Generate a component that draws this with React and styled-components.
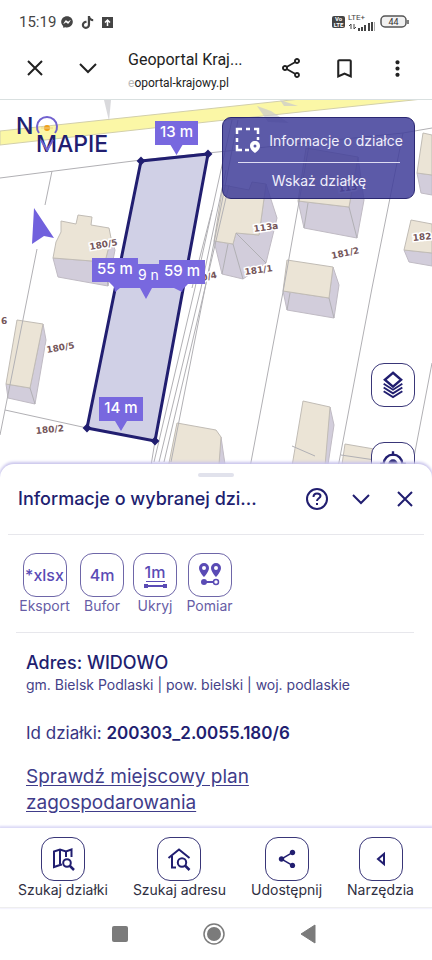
import React from "react";
import styled, { createGlobalStyle } from "styled-components";
import { FaFacebookMessenger, FaTiktok } from "react-icons/fa6";
import { MdBookmarkBorder, MdMoreVert, MdOutlineShare, MdShare } from "react-icons/md";

const ink = "#211e70";
const violet = "#5a4bb5";

const GlobalStyle = createGlobalStyle`
  * { box-sizing: border-box; }
  body { margin: 0; background: #fff; font-family: Inter, "Noto Sans", sans-serif; color: ${ink}; }
  button { margin: 0; padding: 0; border: 0; background: none; color: inherit; font: inherit; cursor: pointer; }
  svg { display: block; }
  h1, h2, p { margin: 0; }
`;

const Screen = styled.div`
  display: flex;
  flex-direction: column;
  min-height: 100vh;
`;

const StatusBar = styled.div`
  display: flex;
  align-items: center;
  justify-content: space-between;
  height: 44px;
  padding: 0 23px 0 19px;
  color: #454545;
  font: 15px Roboto, sans-serif;
`;

const StatusGroup = styled.div`
  display: flex;
  align-items: center;
  gap: ${(p) => p.$gap}px;
`;

const VolteBadge = styled.span`
  width: 13px;
  height: 12px;
  border-radius: 2px;
  background: #444;
  color: #fff;
  font: bold 6px/6px Roboto, sans-serif;
  text-align: center;
`;

const Signal = styled.div`
  display: flex;
  flex-direction: column;
  width: 29px;
  font: 8px/8px Roboto, sans-serif;
`;

const BrowserBar = styled.header`
  display: flex;
  align-items: flex-start;
  height: 56px;
  padding: 4px 22px 0;
  color: #222;
  border-bottom: 1px solid #d9e0e0;
  font-family: Roboto, sans-serif;
`;

const BarButton = styled.button`
  display: grid;
  place-items: center;
  width: 26px;
  height: 40px;
  margin-right: ${(p) => p.$after || 0}px;
`;

const PageName = styled.div`
  flex: 1;
  min-width: 0;
  white-space: nowrap;
`;

const PageTitle = styled.div`
  font-size: 16px;
  line-height: 23px;
`;

const PageUrl = styled.div`
  font-size: 12px;
  line-height: 24px;
  span { color: #bbb; }
`;

const MapArea = styled.section`
  position: relative;
  height: 378px;
  margin-bottom: -14px;
  overflow: hidden;
`;

const MapDrawing = styled.svg`
  width: 100%;
  height: 100%;
`;

const Logo = styled.svg`
  position: absolute;
  left: 14px;
  top: 10px;
`;

const InfoPanel = styled.div`
  position: absolute;
  top: 17px;
  right: 17px;
  width: 193px;
  height: 82px;
  padding: 0 8px 0 9px;
  border: 1px solid #2b2872;
  border-radius: 9px;
  background: rgba(65, 63, 154, 0.86);
  color: #f0effb;
`;

const InfoRow = styled.button`
  display: flex;
  align-items: center;
  justify-content: center;
  gap: 8px;
  width: 100%;
  height: ${(p) => p.$height}px;
  font-size: 14px;
  white-space: nowrap;
`;

const InfoRule = styled.div`
  height: 1px;
  margin: 0 6px;
  background: #dedcf2;
`;

const MapControls = styled.div`
  position: absolute;
  top: 263px;
  right: 17px;
  display: grid;
  gap: 35px;
`;

const Tile = styled.span`
  display: grid;
  place-items: center;
  width: 44px;
  height: 44px;
  border: 1px solid ${(p) => (p.$soft ? "#6e66a8" : "#393678")};
  border-radius: 13px;
  background: #fff;
  color: ${(p) => (p.$soft ? violet : ink)};
  font-size: 16px;
  font-weight: 500;
`;

const Sheet = styled.main`
  position: relative;
  flex: 1;
  border-radius: 14px 14px 0 0;
  background: #fff;
  box-shadow: 0 -1px 3px 1px #c9c4ec;
`;

const Handle = styled.div`
  width: 36px;
  height: 4px;
  margin: 0 auto;
  border-radius: 2px;
  background: #e1e2ec;
`;

const SheetTop = styled.div`
  padding-top: 9px;
`;

const SheetHeader = styled.div`
  display: flex;
  align-items: center;
  height: 58px;
  margin: 0 8px;
  padding: 0 7px 14px 10px;
  border-bottom: 1px solid #e7e7ec;
`;

const SheetTitle = styled.h1`
  flex: 1;
  font-size: 18px;
  line-height: 24px;
  font-weight: 500;
  white-space: nowrap;
`;

const HeaderActions = styled.div`
  display: flex;
  align-items: center;
  gap: 20px;
`;

const Tools = styled.div`
  display: grid;
  grid-template-columns: 53px 44px 44px 47px;
  gap: 9px;
  height: 98px;
  margin: 0 18px 0 16px;
  padding: 18px 2px;
  border-bottom: 1px solid #e7e7ec;
`;

const Action = styled.button`
  display: flex;
  flex-direction: column;
  align-items: center;
  color: ${(p) => (p.$soft ? "#675da6" : "#302f42")};
  font-size: 14px;
  line-height: 17px;
  white-space: nowrap;
`;

const Details = styled.div`
  padding: 18px 26px 10px;
`;

const Address = styled.h2`
  font-size: 18px;
  line-height: 24px;
  font-weight: 500;
`;

const Region = styled.p`
  margin-bottom: 25px;
  color: #454288;
  font-size: 14px;
  line-height: 20px;
`;

const PlotId = styled.p`
  margin-bottom: 18px;
  color: #383583;
  font-size: 17px;
  line-height: 26px;
  strong { color: ${ink}; font-weight: 600; }
`;

const PlanLink = styled.a`
  display: block;
  max-width: 260px;
  color: #403c8a;
  font-size: 19px;
  line-height: 26px;
  text-underline-offset: 2px;
`;

const Toolbar = styled.nav`
  position: relative;
  display: flex;
  justify-content: space-between;
  height: 80px;
  padding: 9px 18px 0;
  background: #fff;
  border-bottom: 1px solid #eee;
  box-shadow: 0 -1px 2px 1px #dcdaf7;
`;

const SystemNav = styled.div`
  display: flex;
  justify-content: center;
  align-items: center;
  gap: 70px;
  height: 52px;
  padding-right: 4px;
  color: #7b7b7b;
`;

const roofs = [
  "61,221 76,224 78,215 92,217 91,225 109,228 111,238 105,262 53,258 56,242 61,232",
  "17,320 43,324 30,388 6,384",
  "223,185 249,190 252,182 266,184 259,235 236,233 233,244 214,241",
  "306,148 358,157 349,207 298,201",
  "287,260 333,267 329,298 283,291",
  "423,133 432,135 432,175 417,173",
  "411,220 432,224 432,253 404,250",
  "303,401 330,407 324,478 290,478",
  "345,444 380,450 380,478 340,478",
  "177,423 216,430 221,437 218,478 166,478",
];
const walls = [
  "53,258 105,262 111,238 115,250 108,286 58,277",
  "43,324 46,340 35,404 8,398 6,384 30,388",
  "266,184 277,218 266,263 243,279 222,274 214,241 233,244 236,233 259,235",
  "298,201 349,207 358,157 364,200 357,238 304,228",
  "333,267 339,285 334,318 287,310 283,291 329,298",
  "417,173 432,175 432,195 421,193",
  "404,250 432,253 432,266 409,262",
  "330,407 334,425 326,478 323,478",
  "221,437 227,478 218,478",
];
const boundaries = [
  "0,178 70,169 141,160 208,153 403,133 432,128",
  "52,171 45,205",
  "37,249 0,435",
  "5,410 87,428 155,441 149,478",
  "232,120 195,288 154,462",
  "226,170 201,288 159,462",
  "229,185 205,288 164,462",
  "238,120 171,462",
  "212,210 192,288",
  "310,140 283,292 248,478",
  "403,133 372,288 336,478",
  "432,363 410,478",
  "105,262 108,286",
  "30,388 35,404",
  "233,244 243,279",
  "236,233 266,263",
  "222,274 228,244",
  "349,207 357,238",
  "304,228 308,203",
  "329,298 334,318",
  "287,310 290,293",
  "292,446 315,456",
  "341,455 375,460",
];
const plotNumbers = [
  ["180/5", 90, 250, -10],
  ["180/5", 47, 353, -10],
  ["180/2", 36, 434, -6],
  ["181/1", 245, 275, -8],
  ["181/2", 332, 259, -12],
  ["182", 413, 241, -6],
  ["6", 1, 324, 0],
  ["0/4", 202, 281, -12],
  ["113a", 254, 232, -8],
  ["113", 339, 192, -8],
];

function Tag({ x, y, w, label, tip = 10 }) {
  const mid = x + w / 2;
  return (
    <g>
      <path d={`M${x} ${y}h${w}v24H${mid + 6}L${mid} ${y + 24 + tip}L${mid - 6} ${y + 24}H${x}z`} fill="#7868df" />
      <text x={mid} y={y + 16} textAnchor="middle" fill="#fff" fontSize="15" fontWeight="500">{label}</text>
    </g>
  );
}

function PlotMap() {
  return (
    <MapDrawing viewBox="0 100 432 378" preserveAspectRatio="xMidYMin slice" role="img" aria-label="Mapa działek">
      <rect y="100" width="432" height="378" fill="#fff" />
      <path d="M0 131L216 108L432 85V98L216 121L0 145z" fill="#fbf7a6" stroke="#d2cfab" strokeWidth="1" />
      <path d="M104 100h7l-2 21zM257 106l11 16 21 1-18-12zM280 100l18 6-14 0z" fill="#c9c9cd" opacity=".7" />
      <g fill="#d2cddb" stroke="#c0bbc4">{walls.map((p) => <polygon key={p} points={p} />)}</g>
      <g fill="#ebe4d6" stroke="#c1bcb5">{roofs.map((p) => <polygon key={p} points={p} />)}</g>
      <g fill="none" stroke="#b1b0b4" strokeWidth="1">{boundaries.map((p) => <polyline key={p} points={p} />)}</g>
      <g fill="#75565a" stroke="#fff" strokeWidth="3" paintOrder="stroke" fontFamily="DejaVu Sans" fontSize="9" fontWeight="bold">
        {plotNumbers.map(([label, x, y, turn]) => (
          <text key={`${label}${x}`} x={x} y={y} transform={`rotate(${turn} ${x} ${y})`}>{label}</text>
        ))}
      </g>
      <polygon points="141,161 208,154 155,441 87,428" fill="#d0d0e6" stroke={ink} strokeWidth="3" />
      <path d="M141 158l3 3-3 3-3-3zM208 151l3 3-3 3-3-3zM155 438l3 3-3 3-3-3zM87 425l3 3-3 3-3-3z" fill={ink} stroke={ink} strokeWidth="2" />
      <path d="M34 208L54 238L44 236L32 244z" fill="#7161dd" />
      <Tag x={155} y={121} w={43} label="13 m" />
      <path d="M109 264H190L182 292L174 288H152L146 299L140 288H120L115 292z" fill="#7868df" />
      <text x="138" y="280" fill="#fff" fontSize="14">9 n</text>
      <Tag x={92} y={258} w={46} label="55 m" tip={6} />
      <Tag x={159} y={260} w={46} label="59 m" tip={6} />
      <Tag x={99} y={397} w={44} label="14 m" />
    </MapDrawing>
  );
}

function BrandLogo() {
  return (
    <Logo width="104" height="48" viewBox="14 110 104 48" role="img" aria-label="No Mapie">
      <g fill={ink} fontFamily="Inter" fontWeight="500">
        <text x="16" y="134" fontSize="23">N</text>
        <text x="36" y="152" fontSize="23">MAPIE</text>
      </g>
      <path d="M39 133A10 10 0 1 1 55 133" fill="none" stroke="#7161cf" strokeWidth="2" />
      <path d="M41 140l6 10 6-10" fill="none" stroke="#7161cf" strokeWidth="2" />
      <circle cx="47" cy="128" r="3" fill="#efa11c" />
      <path d="M41 128h12" stroke="#efcf8c" strokeWidth="1" />
    </Logo>
  );
}

const Stroke = ({ size = 24, width = 2, children }) => (
  <svg width={size} height={size} viewBox="0 0 24 24" fill="none" stroke="currentColor" strokeWidth={width} aria-hidden="true">{children}</svg>
);

const Cross = () => <Stroke><path d="M5 5l14 14M19 5L5 19" /></Stroke>;
const Chevron = () => <Stroke><path d="M4 8l8 8 8-8" /></Stroke>;

const LayersIcon = () => (
  <Stroke size={28}><path d="M12 1.500L19 7.500 12 13.500 5 7.500z" /><path d="M4 12l8 5 8-5M4 15.200l8 5 8-5M4 18.400l8 5 8-5" strokeWidth="1.600" transform="translate(0 -1)" /></Stroke>
);
const LocateIcon = () => (
  <Stroke size={28}><circle cx="12" cy="12" r="8" /><circle cx="12" cy="12" r="4" fill="currentColor" stroke="none" /><path d="M12 1v4M12 19v4M1 12h4M19 12h4" /></Stroke>
);
const SelectAreaIcon = () => (
  <svg width="26" height="26" viewBox="0 0 26 26" fill="none" aria-hidden="true">
    <path d="M2 7V2h5M11 2h4M19 2h4v5M23 10v3M2 11v4M2 18v5h5M10 23h4" stroke="#fff" strokeWidth="2.500" />
    <path fillRule="evenodd" d="M20 14c-3 0-5 2-5 5 0 4 5 7 5 7s5-3 5-7c0-3-2-5-5-5zm0 3.500a1.500 1.500 0 110 3 1.500 1.500 0 010-3z" fill="#fff" />
  </svg>
);
const MeasureIcon = () => (
  <svg width="26" height="26" viewBox="0 0 26 26" aria-hidden="true">
    <path fill={violet} fillRule="evenodd" d="M7 1a5 5 0 00-5 5c0 4 5 9 5 9s5-5 5-9a5 5 0 00-5-5zm0 3a2 2 0 110 4 2 2 0 010-4zM19 1a5 5 0 00-5 5c0 4 5 9 5 9s5-5 5-9a5 5 0 00-5-5zm0 3a2 2 0 110 4 2 2 0 010-4z" />
    <path d="M7 20h9" stroke={violet} strokeWidth="2" /><circle cx="7" cy="20" r="3" fill={violet} /><circle cx="19" cy="20" r="2.500" fill="#fff" stroke={violet} strokeWidth="1.500" />
  </svg>
);
const DistanceLabel = styled.span`
  display: grid;
  justify-items: center;
  line-height: 18px;
`;
const Dimension = () => (
  <svg width="23" height="7" viewBox="0 0 23 7" fill={violet} aria-hidden="true"><path d="M2 0h19v1H2zM0 3h4v4H0zM19 3h4v4h-4zM4 4h15v2H4z" /></svg>
);
const MapSearchIcon = () => (
  <Stroke size={24}><path d="M20.500 10V2.500L15 4.500 9 2.500 3 4.500v15.500l6-2 2-.5M9 3v14M15 5v5" /><circle cx="16" cy="16" r="3.800" /><path d="M18.500 18.500L23 23" strokeWidth="2.500" /></Stroke>
);
const HomeSearchIcon = () => (
  <Stroke size={24}><path d="M1.500 11L12 2.500 22.500 11M5 9v11.500h4" /><circle cx="15" cy="15.500" r="4.200" /><path d="M18 18.500L22.500 23" strokeWidth="2.500" /></Stroke>
);
const HelpIcon = () => (
  <Stroke><circle cx="12" cy="12" r="10" /><path d="M8.500 10c0-5 7-4 7-1 0 2-3.500 2.500-3.500 5" /><path d="M12 16v2" /></Stroke>
);
const BackIcon = () => <Stroke><path d="M15 7v10L9 12z" /></Stroke>;

export default function App() {
  return (
    <>
      <GlobalStyle />
      <Screen>
        <StatusBar>
          <StatusGroup $gap={5}>
            <span>15:19</span>
            <StatusGroup $gap={8}>
              <FaFacebookMessenger size={12} />
              <FaTiktok size={13} />
              <svg width="11" height="11" viewBox="0 0 11 11"><rect width="11" height="11" fill="#444" /><path d="M5.500 9V3M3 5.500L5.500 3 8 5.500" fill="none" stroke="#fff" strokeWidth="1.500" /></svg>
            </StatusGroup>
          </StatusGroup>
          <StatusGroup $gap={3}>
            <VolteBadge>Vo<br />LTE</VolteBadge>
            <Signal>
              <span>LTE+</span>
              <svg width="29" height="9" viewBox="0 0 29 9"><path d="M3 2v5M1 4l2-2M6 2v5l2-2" stroke="#444" fill="none" /><path d="M10 6h2v3h-2zM13 5h2v4h-2zM16 3h2v6h-2zM20 1h2v8h-2zM23 0h2v9h-2z" fill="#444" /><path d="M26 0h1v9h-1z" fill="#aaa" /></svg>
            </Signal>
            <svg width="29" height="14" viewBox="0 0 29 14">
              <rect x="1" y="1" width="25" height="11" rx="4" fill="#f1f1f1" stroke="#555" strokeWidth="1.500" />
              <path d="M28 5v4" stroke="#555" strokeWidth="1.500" />
              <text x="13.500" y="10" fontSize="9" fontFamily="Roboto" textAnchor="middle" fill="#333">44</text>
            </svg>
          </StatusGroup>
        </StatusBar>

        <BrowserBar>
          <BarButton aria-label="Zamknij" $after={27}><Cross /></BarButton>
          <BarButton aria-label="Rozwiń" $after={27}><Chevron /></BarButton>
          <PageName>
            <PageTitle>Geoportal Kraj...</PageTitle>
            <PageUrl><span>e</span>oportal-krajowy.pl</PageUrl>
          </PageName>
          <BarButton aria-label="Udostępnij stronę" $after={27}><MdOutlineShare size={24} /></BarButton>
          <BarButton aria-label="Dodaj zakładkę" $after={27}><MdBookmarkBorder size={25} /></BarButton>
          <BarButton aria-label="Więcej"><MdMoreVert size={25} /></BarButton>
        </BrowserBar>

        <MapArea>
          <PlotMap />
          <BrandLogo />
          <InfoPanel>
            <InfoRow $height={44}><SelectAreaIcon />Informacje o działce</InfoRow>
            <InfoRule />
            <InfoRow $height={34}>Wskaż działkę</InfoRow>
          </InfoPanel>
          <MapControls>
            <button aria-label="Warstwy"><Tile><LayersIcon /></Tile></button>
            <button aria-label="Moja lokalizacja"><Tile><LocateIcon /></Tile></button>
          </MapControls>
        </MapArea>

        <Sheet>
          <SheetTop>
            <Handle />
            <SheetHeader>
              <SheetTitle>Informacje o wybranej dzi...</SheetTitle>
              <HeaderActions>
                <button aria-label="Pomoc"><HelpIcon /></button>
                <button aria-label="Zwiń"><Chevron /></button>
                <button aria-label="Zamknij panel"><Cross /></button>
              </HeaderActions>
            </SheetHeader>
          </SheetTop>
          <Tools>
            <Action $soft><Tile $soft>*xlsx</Tile>Eksport</Action>
            <Action $soft><Tile $soft>4m</Tile>Bufor</Action>
            <Action $soft><Tile $soft><DistanceLabel>1m<Dimension /></DistanceLabel></Tile>Ukryj</Action>
            <Action $soft><Tile $soft><MeasureIcon /></Tile>Pomiar</Action>
          </Tools>
          <Details>
            <Address>Adres: WIDOWO</Address>
            <Region>gm. Bielsk Podlaski | pow. bielski | woj. podlaskie</Region>
            <PlotId>Id działki: <strong>200303_2.0055.180/6</strong></PlotId>
            <PlanLink href="#plan">Sprawdź miejscowy plan zagospodarowania</PlanLink>
          </Details>
        </Sheet>

        <Toolbar>
          <Action><Tile><MapSearchIcon /></Tile>Szukaj działki</Action>
          <Action><Tile><HomeSearchIcon /></Tile>Szukaj adresu</Action>
          <Action><Tile><MdShare size={22} /></Tile>Udostępnij</Action>
          <Action><Tile><BackIcon /></Tile>Narzędzia</Action>
        </Toolbar>

        <SystemNav>
          <button aria-label="Ostatnie aplikacje"><svg width="24" height="24" viewBox="0 0 24 24"><rect x="4" y="4" width="16" height="16" rx="2" fill="currentColor" /></svg></button>
          <button aria-label="Ekran główny"><svg width="24" height="24" viewBox="0 0 24 24"><circle cx="12" cy="12" r="10" fill="none" stroke="currentColor" strokeWidth="1.500" /><circle cx="12" cy="12" r="7" fill="currentColor" /></svg></button>
          <button aria-label="Wstecz"><svg width="24" height="24" viewBox="0 0 24 24"><path d="M5 12L19 3v18z" fill="currentColor" stroke="currentColor" strokeLinejoin="round" /></svg></button>
        </SystemNav>
      </Screen>
    </>
  );
}
